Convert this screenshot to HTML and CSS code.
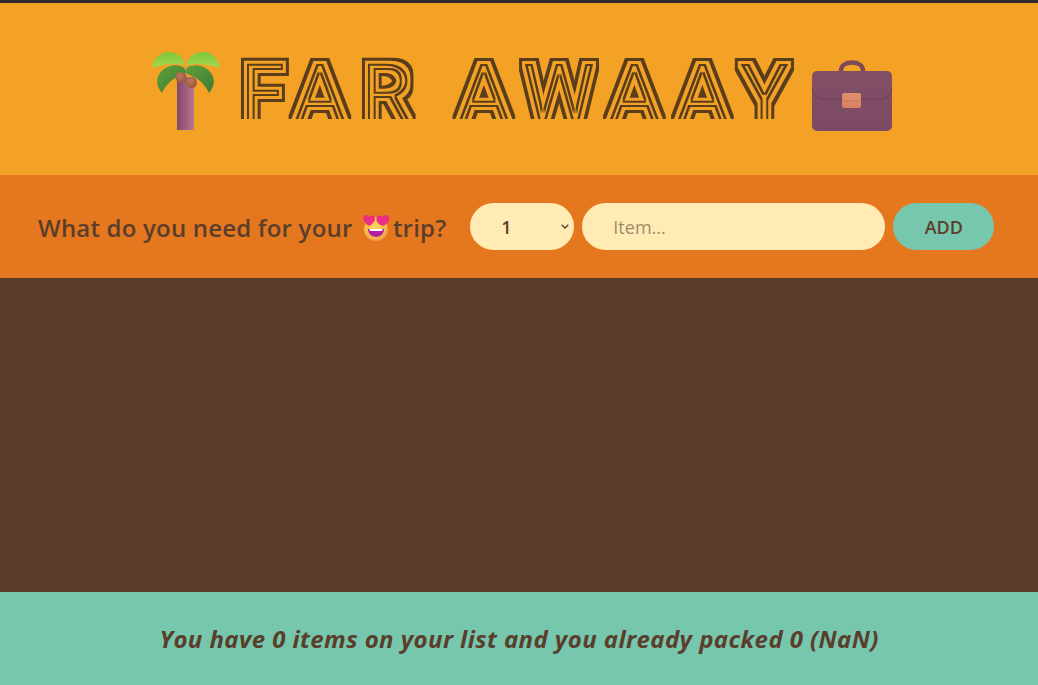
FILE: index.html
```html
<!DOCTYPE html>
<html lang="en">
<head>
<meta charset="utf-8">
<title>Far Away</title>
<link rel="stylesheet" href="styles.css">
</head>
<body>
<svg class="defs" width="0" height="0" aria-hidden="true">
  <defs>
    <filter id="inline-lines" x="-5%" y="-30%" width="110%" height="160%" color-interpolation-filters="sRGB">
      <feMorphology in="SourceGraphic" operator="erode" radius="2" result="core"/>
      <feComposite in="SourceGraphic" in2="core" operator="out" result="edge"/>
      <feMorphology in="SourceGraphic" operator="dilate" radius="3" result="inner"/>
      <feMorphology in="SourceGraphic" operator="dilate" radius="6" result="outer"/>
      <feComposite in="outer" in2="inner" operator="out" result="ring"/>
      <feMerge result="all"><feMergeNode in="ring"/><feMergeNode in="edge"/></feMerge>
      <feGaussianBlur in="all" stdDeviation="0.3"/>
    </filter>
    <linearGradient id="trunk" x1="0" x2="1" y1="0" y2="0">
      <stop offset="0" stop-color="#84476a"/><stop offset=".55" stop-color="#a45f7f"/><stop offset="1" stop-color="#b87a8e"/>
    </linearGradient>
    <linearGradient id="leaf-light" x1="0" x2="0" y1="0" y2="1">
      <stop offset="0" stop-color="#7cc63c"/><stop offset="1" stop-color="#a9d84f"/>
    </linearGradient>
    <linearGradient id="leaf-dark" x1="0" x2="1" y1="0" y2="1">
      <stop offset="0" stop-color="#5fa03c"/><stop offset="1" stop-color="#3e7a33"/>
    </linearGradient>
    <radialGradient id="nut" cx=".4" cy=".35" r=".7">
      <stop offset="0" stop-color="#bf7a5c"/><stop offset="1" stop-color="#96523f"/>
    </radialGradient>
    <linearGradient id="case" x1="0" x2="0" y1="0" y2="1">
      <stop offset="0" stop-color="#824f66"/><stop offset="1" stop-color="#7d4a66"/>
    </linearGradient>
    <linearGradient id="clasp" x1="0" x2="0" y1="0" y2="1">
      <stop offset="0" stop-color="#e2906c"/><stop offset="1" stop-color="#d97f66"/>
    </linearGradient>
    <radialGradient id="face" cx=".45" cy=".4" r=".65">
      <stop offset="0" stop-color="#fbd75b"/><stop offset=".7" stop-color="#f8b84a"/><stop offset="1" stop-color="#ee8a55"/>
    </radialGradient>
  </defs>
</svg>
<div class="app">
  <header class="banner">
    <svg class="palm" viewBox="0 0 72 82" width="72" height="82" aria-hidden="true">
      <rect x="27" y="27" width="17" height="53" fill="url(#trunk)"/>
      <path d="M2 18C3 8 11 2 19 2 27 2 33 7 35 15 26 13 14 14 2 18Z" fill="url(#leaf-light)"/>
      <path d="M70 18C69 8 61 2 53 2 45 2 38 7 36 15 45 13 57 14 70 18Z" fill="url(#leaf-light)"/>
      <path d="M12 43C6 36 6 28 10 23 15 16 24 14 31 16 34 17 36 20 36 23L27 27C21 30 15 36 12 43Z" fill="url(#leaf-dark)"/>
      <path d="M59 43C65 36 65 28 61 23 56 16 47 14 40 16 37 17 35 20 35 23L44 27C50 30 56 36 59 43Z" fill="url(#leaf-dark)"/>
      <circle cx="31" cy="27.500" r="5.500" fill="url(#nut)"/>
      <circle cx="41.500" cy="32.500" r="5.500" fill="url(#nut)"/>
    </svg>
    <h1 class="logo"><span class="logo-text">FAR AWAAY</span></h1>
    <svg class="case" viewBox="0 0 80 72" width="80" height="72" aria-hidden="true">
      <path d="M29 13V11C29 5 34 2.500 40 2.500S51 5 51 11V13" fill="none" stroke="#7f4a58" stroke-width="4.500"/>
      <rect x="0" y="11" width="80" height="60" rx="5" fill="url(#case)"/>
      <path d="M0 28C0 35 5 39 12 39H68C75 39 80 35 80 28" fill="none" stroke="#6e3f58" stroke-width="1.200"/>
      <rect x="30" y="33" width="19" height="15" rx="2.500" fill="url(#clasp)"/>
      <path d="M30 41H49" stroke="#c9725a" stroke-width=".8"/>
    </svg>
  </header>
  <form class="add-form">
    <h3 class="prompt">What do you need for your <svg class="smile" viewBox="0 0 28 28" width="28" height="28" aria-hidden="true">
        <circle cx="14" cy="16" r="12" fill="url(#face)"/>
        <path d="M6 16H22C22 21 18 24 14 24S6 21 6 16Z" fill="#b01fa0"/>
        <path d="M7.500 16H20.500L20 18H8Z" fill="#fff"/>
        <path d="M7 13C1 9 0 5 2 3 4 1 6 2 7.500 4 9 2 11.500 2 12.500 4 14 7 11 11 7 13Z" fill="#e92e83"/>
        <path d="M21 13C15 11 13.500 7 15 4 16 2 19 2 20.500 4 22 2 24.500 1 26.500 3 28.500 6 27 10 21 13Z" fill="#e92e83"/>
      </svg><span>trip?</span></h3>
    <select class="qty"><option>1</option></select>
    <input class="item" type="text" placeholder="Item...">
    <button class="add" type="button">Add</button>
  </form>
  <main class="list"></main>
  <footer class="stats"><em>You have 0 items on your list and you already packed 0 (NaN)</em></footer>
</div>
</body>
</html>
```
FILE: styles.css
```css
* {
  margin: 0;
  padding: 0;
  box-sizing: border-box;
}

html,
body {
  height: 100%;
}

body {
  font-family: "Open Sans", "Noto Sans", sans-serif;
  color: #5a3e2b;
  background: #5a3e2b;
}

.defs {
  position: absolute;
}

.app {
  display: grid;
  grid-template-rows: 172px 103px 1fr 93px;
  height: 100vh;
  border-top: 3px solid #2e2c2b;
}

.banner {
  display: flex;
  align-items: center;
  justify-content: center;
  padding-left: 4px;
  background: #f4a226;
}

.palm {
  flex: none;
  margin-top: 4px;
}

.case {
  flex: none;
  margin-top: 14px;
}

.logo {
  flex: none;
  width: 590px;
  padding-left: 18px;
  margin-top: 10px;
}

.logo-text {
  display: block;
  font-family: "Roboto", "Inter", sans-serif;
  font-size: 81.500px;
  font-weight: 400;
  line-height: 80px;
  letter-spacing: 14.800px;
  word-spacing: -4px;
  white-space: pre;
  color: #5a3e1b;
  filter: url(#inline-lines);
  clip-path: inset(-20px -20px 15px -20px);
}

.add-form {
  display: flex;
  align-items: center;
  gap: 8px;
  padding: 0 44px 0 38px;
  background: #e5771f;
}

.prompt {
  display: flex;
  align-items: center;
  padding-top: 1px;
  font-size: 24px;
  font-weight: 600;
  letter-spacing: 0.2px;
  margin-right: 16px;
  white-space: pre;
}

.smile {
  flex: none;
  margin: 0 3px;
}

.qty,
.item,
.add {
  height: 47px;
  border: none;
  border-radius: 24px;
  font-family: inherit;
  font-size: 18px;
  font-weight: 600;
  color: #5a3e2b;
  background: #ffebb3;
}

.qty {
  flex: none;
  width: 104px;
  padding-left: 31px;
  appearance: none;
  background: #ffebb3 url("data:image/svg+xml,%3Csvg xmlns='http://www.w3.org/2000/svg' width='8' height='5'%3E%3Cpath d='M.7.7 4 4 7.300.7' fill='none' stroke='%235a3e2b' stroke-width='1.300'/%3E%3C/svg%3E") no-repeat right 5px center;
}

.item {
  flex: none;
  width: 303px;
  padding-left: 31px;
  font-weight: 500;
}

.item::placeholder {
  color: #9d8a6c;
}

.add {
  flex: none;
  width: 101px;
  text-transform: uppercase;
  background: #76c7ad;
}

.list {
  background: #5a3e2b;
}

.stats {
  display: flex;
  align-items: center;
  justify-content: center;
  background: #76c7ad;
  font-size: 24px;
  font-weight: 700;
  letter-spacing: 0.420px;
}
```
